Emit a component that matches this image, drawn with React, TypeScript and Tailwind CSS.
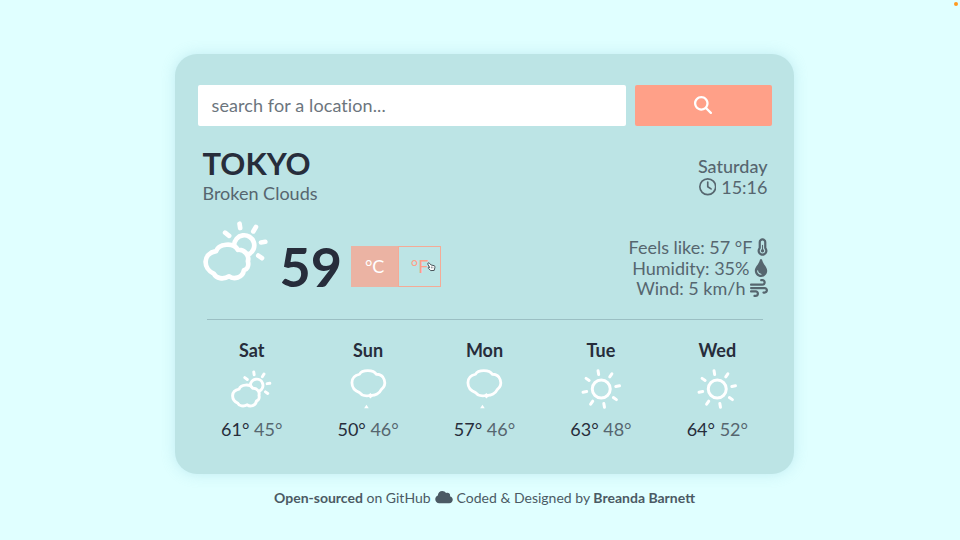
import React from "react";
import { FaMagnifyingGlass, FaRegClock, FaTemperatureHalf, FaWind, FaCloud } from "react-icons/fa6";
import { FaTint } from "react-icons/fa";

type IconProps = { className?: string };

function CloudSun({ className }: IconProps) {
  return (
    <svg viewBox="36 33 194 179" fill="none" stroke="white" strokeWidth="14" strokeLinecap="round" strokeLinejoin="round" className={className}>
      <path d="M75 123C82 101 127 95 140 119C160 117 175 136 170 153C174 169 166 178 158 180C155 203 127 209 114 198C96 209 75 204 69 191C34 174 35 130 75 123Z" />
      <path d="M129 105A30 30 0 1 1 173 132" />
      <path d="M145 41L147 54M194 51L186 64M222 95L209 97M212 144L201 136M102 68L114 77" />
    </svg>
  );
}

function Rain({ className }: IconProps) {
  return (
    <svg viewBox="443 117 121 122" fill="none" stroke="white" strokeWidth="8.5" strokeLinejoin="round" className={className}>
      <path d="M477 133C484 118 520 118 528 133C553 132 563 164 543 180C538 191 525 198 511 197C496 202 483 197 477 189C446 177 446 139 477 133Z" />
      <path d="M502 198L510 190L518 199L510 207Z" fill="white" stroke="none" />
      <path d="M498 226L505 237H491Z" fill="white" stroke="none" />
    </svg>
  );
}

function Sun({ className }: IconProps) {
  return (
    <svg viewBox="-20 -20 40 40" fill="none" stroke="white" strokeWidth="3" strokeLinecap="round" className={className}>
      <circle r="9" />
      {[0, 45, 90, 135, 180, 225, 270, 315].map((a) => (
        <path key={a} d="M14.8 0H18.5" transform={`rotate(${a - 10})`} />
      ))}
    </svg>
  );
}

const days = [
  { name: "Sat", Icon: CloudSun, high: 61, low: 45 },
  { name: "Sun", Icon: Rain, high: 50, low: 46 },
  { name: "Mon", Icon: Rain, high: 57, low: 46 },
  { name: "Tue", Icon: Sun, high: 63, low: 48 },
  { name: "Wed", Icon: Sun, high: 64, low: 52 },
];

export default function App() {
  return (
    <div className="relative flex h-[540px] w-[960px] flex-col overflow-hidden bg-[#e0ffff] pl-[175px] pt-[54px] font-[Lato,sans-serif] text-[18px] text-[#56666f]">
      <span className="absolute right-[2px] top-[2px] size-1 rounded-full bg-[#ff9a1f]" />
      <main className="flex h-[420px] w-[619px] flex-col rounded-[22px] bg-[#bce4e5] px-[22.5px] pt-[31px] shadow-[0_0_14px_rgba(120,190,210,0.3)]">
        <form className="flex h-[41px] gap-[8.5px]">
          <div className="flex w-[428.5px] items-center rounded-[2px] bg-white pl-[14px] text-[#6c757d]">
            <span className="tracking-[0.1px]">search for a location...</span>
          </div>
          <button type="button" className="flex w-[137px] items-center justify-center rounded-[2px] bg-[#ffa088] pb-0.5 text-white">
            <FaMagnifyingGlass className="size-[18px]" />
          </button>
        </form>

        <section className="flex h-[82px] justify-between pl-[5px] pr-[4px] pt-[20px]">
          <div>
            <h1 className="text-[31px] font-bold leading-[34px] text-[#272d3b]">TOKYO</h1>
            <p className="mt-[3px] leading-[21px]">Broken Clouds</p>
          </div>
          <div className="flex flex-col items-end pt-[10px] leading-[20.5px]">
            <p className="font-medium">Saturday</p>
            <p className="flex items-center gap-[5px]"><FaRegClock className="size-[17.5px]" />15:16</p>
          </div>
        </section>

        <section className="flex h-[111px] items-start justify-between pl-[5px] pr-[4px]">
          <div className="flex">
            <CloudSun className="mt-[13px] h-[60px] w-[65px]" />
            <span className="ml-[12px] mt-[29px] text-[54px] font-bold leading-[60px] text-[#272d3b]">59</span>
            <div className="ml-[9px] mt-[38px] flex h-[41px] w-[90px]">
              <span className="flex w-[47px] items-center justify-center bg-[#ebb3a3] text-white">°C</span>
              <span className="relative flex w-[43px] items-center justify-center border border-[#f5aa96] text-[#ffa088]">
                °F
                <svg viewBox="0 0 10 11" className="absolute left-[28px] top-[15px] h-[10px] w-[9px]">
                  <path d="M1 1.2Q1.8.4 2.8 1.4L4.6 3.3 8 4Q9 4.3 8.8 6L8 9.3 4.2 9.5 1.4 6.8Q1 5.8 2 5.7L3 6.1 1 2.5Z" fill="white" stroke="#39424a" strokeWidth="1" strokeLinejoin="round" />
                  <path d="M5 5V7M6.5 5.2V7" stroke="#39424a" strokeWidth=".6" />
                </svg>
              </span>
            </div>
          </div>
          <div className="flex flex-col items-end pt-[29px] leading-[20.5px]">
            <p className="flex items-center gap-1">Feels like: 57 °F<FaTemperatureHalf className="h-[18px] w-[11px]" /></p>
            <p className="flex items-center gap-1">Humidity: 35%<FaTint className="h-[18px] w-[14px]" /></p>
            <p className="flex items-center gap-1">Wind: 5 km/h<FaWind className="size-[18px]" /></p>
          </div>
        </section>

        <hr className="mx-[9px] border-t-[1.5px] border-[#9bbfc3]" />

        <section className="-mx-[4px] flex pt-[19px]">
          {days.map(({ name, Icon, high, low }) => (
            <div key={name} className="flex w-[116.5px] flex-col items-center">
              <h2 className="font-bold leading-[22px] text-[#272d3b]">{name}</h2>
              <Icon className="mt-[8px] h-[40px] w-[40.5px]" />
              <p className="mt-[9px] leading-[22px]"><span className="text-[#272d3b]">{high}°</span> <span>{low}°</span></p>
            </div>
          ))}
        </section>
      </main>
      <footer className="mt-[13px] flex h-[20px] w-[619px] items-center justify-center gap-1 text-[14px] text-[#4b5a64]">
        <span><b className="font-bold">Open-sourced</b> on GitHub</span>
        <FaCloud className="h-[14px] w-[18px]" />
        <span>Coded &amp; Designed by <b className="font-bold">Breanda Barnett</b></span>
      </footer>
    </div>
  );
}
